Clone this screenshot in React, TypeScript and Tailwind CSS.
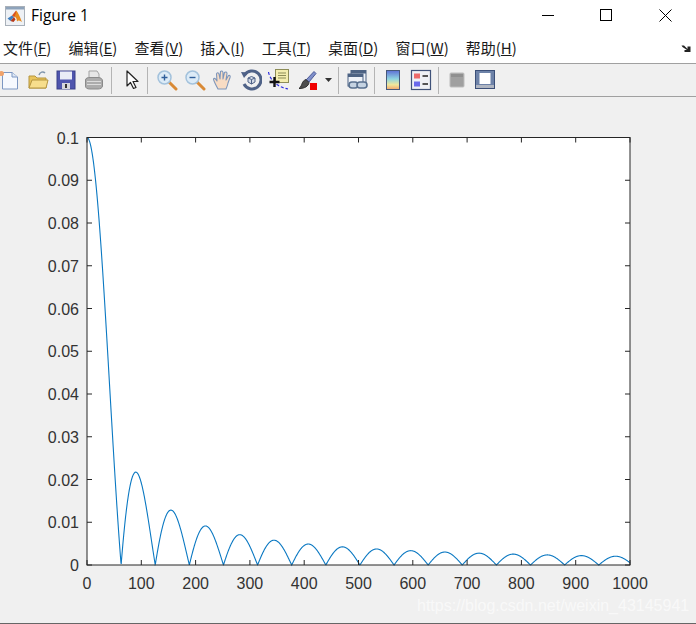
import React from 'react';

const X0 = 87;
const X1 = 630;
const Y0 = 565;
const Y1 = 137.5;

const sx = (v: number) => X0 + ((X1 - X0) * v) / 1000;
const sy = (v: number) => Y0 - ((Y0 - Y1) * v) / 0.1;

// |sinc| curve
const curve = Array.from({ length: 2001 }, (_, i) => {
  const x = i / 2;
  const u = x / 20;
  const y = x === 0 ? 0.1 : 0.1 * Math.abs(Math.sin(u) / u);
  return `${sx(x).toFixed(2)},${sy(y).toFixed(2)}`;
}).join(' ');

const xTicks = [0, 100, 200, 300, 400, 500, 600, 700, 800, 900, 1000];
const yTicks = [0, 0.01, 0.02, 0.03, 0.04, 0.05, 0.06, 0.07, 0.08, 0.09, 0.1];

const menus = [
  ['文件(', 'F'],
  ['编辑(', 'E'],
  ['查看(', 'V'],
  ['插入(', 'I'],
  ['工具(', 'T'],
  ['桌面(', 'D'],
  ['窗口(', 'W'],
  ['帮助(', 'H'],
];

const Icon: React.FC<{ children: React.ReactNode; first?: boolean }> = ({ children, first }) => (
  <div className={first ? 'w-[24px] h-[22px] flex justify-start' : 'w-[28px] h-[22px] flex justify-center'}>
    <svg width="22" height="22" viewBox="0 0 22 22" fill="none" className={first ? '-ml-[1px]' : ''}>
      {children}
    </svg>
  </div>
);

const Sep: React.FC<{ className: string }> = ({ className }) => (
  <div className={`w-[1px] h-[27px] bg-[#b4b4b4] ${className}`} />
);

const MatlabLogo = () => (
  <svg width="20" height="20" viewBox="0 0 20 20" fill="none">
    <rect x="0.5" y="0.5" width="19" height="19" fill="#eef1f5" stroke="#a8b0b9" />
    <rect x="1" y="1" width="18" height="2.5" fill="#8ea3bb" />
    <path d="M2.5 12.5 L7 9.5 L9 11 L5.5 15 Z" fill="#3f7fbf" />
    <path d="M7 9.5 L11 4.5 L13 9 L9 11 Z" fill="#d9531e" />
    <path d="M11 4.5 C13 6 15.5 12 17 16 C15 14.5 13.5 13.5 12 15.5 C11.5 12 11 11 9.5 11 L11 7 Z" fill="#e98a1c" />
    <path d="M5.5 15 L9 11 L10.5 13.5 L8.5 16 Z" fill="#b5391b" />
  </svg>
);

export default function App() {
  return (
    <div className="w-[696px] h-[624px] flex flex-col bg-[#f0f0f0] overflow-hidden font-['Liberation_Sans',sans-serif]">
      {/* Title bar */}
      <div className="h-[35px] bg-white flex items-center shrink-0">
        <div className="ml-[5px] -mt-[4px]">
          <MatlabLogo />
        </div>
        <span className="ml-[6px] -mt-[4px] text-[15.5px] text-black font-['Open_Sans',sans-serif]">Figure 1</span>
        <div className="ml-auto flex items-center -mt-[5px]">
          <svg width="12" height="12" viewBox="0 0 12 12" className="mr-[46px]">
            <path d="M0 6.5H12" stroke="#000" />
          </svg>
          <svg width="12" height="12" viewBox="0 0 12 12" className="mr-[47px]">
            <rect x="0.5" y="0.5" width="11" height="11" fill="none" stroke="#000" />
          </svg>
          <svg width="13" height="13" viewBox="0 0 13 13" className="mr-[24px]">
            <path d="M0.5 0.5L12.5 12.5M12.5 0.5L0.5 12.5" stroke="#000" />
          </svg>
        </div>
      </div>

      {/* Menu bar */}
      <div className="h-[29px] bg-white flex items-center pl-[3px] pb-[2px] shrink-0 border-b border-[#a0a0a0] relative">
        <div className="flex gap-[17px] text-[15px] leading-[20px] text-[#1a1a1a] font-['Noto_Sans_CJK_SC','Liberation_Sans',sans-serif]">
          {menus.map(([label, key]) => (
            <span key={key} className="whitespace-nowrap">
              {label}
              <span className="underline">{key}</span>)
            </span>
          ))}
        </div>
        <svg width="11" height="9" viewBox="0 0 11 9" className="absolute left-[681px] top-[9px]">
          <path d="M0.5 1.5H3L6.5 5V2.5H9.5V8H3.5V6H6L1.5 3Z" fill="#222" />
        </svg>
      </div>

      {/* Toolbar */}
      <div className="h-[33px] flex items-center shrink-0 border-b border-[#a0a0a0]">
        <Icon first>
          <path d="M3.5 3.5H13L18.5 8V20H3.5Z" fill="#f6f9fe" stroke="#7c97c2" />
          <path d="M13 3.5V8H18.5" fill="#dfe8f5" stroke="#7c97c2" />
          <circle cx="2.5" cy="4.5" r="2.5" fill="#f0a36b" />
        </Icon>
        <Icon>
          <path d="M2 7H8L10 9H19V19H2Z" fill="#e9c45c" stroke="#b5953f" />
          <path d="M2 19L5 11H21L19 19Z" fill="#f7de8c" stroke="#b5953f" />
          <path d="M12 6C13 3 16 2 18 4" stroke="#7f95ad" strokeWidth="1.5" />
        </Icon>
        <Icon>
          <rect x="2" y="2" width="18" height="18" fill="#4f55ae" stroke="#3a4189" />
          <rect x="5" y="2.5" width="12" height="8" fill="#e9ecf7" />
          <rect x="7" y="14" width="8" height="6" fill="#d6d6dc" />
          <rect x="10" y="15" width="2" height="4" fill="#333" />
        </Icon>
        <Icon>
          <path d="M6 2H14L16 5V10H6Z" fill="#e6e6e6" stroke="#a3a3a3" />
          <path d="M2.5 11C2.5 9 5 8.5 7 8.5H15C18 8.5 19.5 10 19.5 12V17C19.5 19 17 20 15 20H7C4 20 2.5 19 2.5 17Z" fill="#acacac" stroke="#8a8a8a" />
          <path d="M4 12.5H18M4 15.5H18" stroke="#dcdcdc" />
        </Icon>
        <Sep className="ml-[3px] mr-[6px]" />
        <Icon>
          <path d="M6 2V17L9.5 13.5L12.5 19.5L15 18.5L12 12.5H17Z" fill="#fff" stroke="#222" strokeWidth="1.2" strokeLinejoin="round" />
        </Icon>
        <Sep className="ml-[1px] mr-[5px]" />
        <Icon>
          <path d="M13 13L20 20" stroke="#d98a36" strokeWidth="3" strokeLinecap="round" />
          <circle cx="8.5" cy="8.5" r="6.5" fill="#dcebf7" stroke="#a3c2dc" strokeWidth="1.5" />
          <path d="M5.5 8.5H11.5M8.5 5.5V11.5" stroke="#2f5f9b" strokeWidth="1.4" />
        </Icon>
        <Icon>
          <path d="M13 13L20 20" stroke="#d98a36" strokeWidth="3" strokeLinecap="round" />
          <circle cx="8.5" cy="8.5" r="6.5" fill="#dcebf7" stroke="#a3c2dc" strokeWidth="1.5" />
          <path d="M5.5 8.5H11.5" stroke="#2f5f9b" strokeWidth="1.4" />
        </Icon>
        <Icon>
          <path d="M6 20C4 16 1.5 12 1.5 10C2.5 8.5 4 10 5 12L4.5 5C5 3 6.5 3.5 7 5L8 10L8.5 2.5C9.5 1.5 10.5 2 11 3.5L11 10L12.5 3.5C13.5 2.5 15 3 15 4.5L14 11L16.5 6.5C18 6 18.5 7 18 8.5L16 14C15.5 17 14.5 18.5 14 20Z" fill="#f8dcc4" stroke="#7d96bb" strokeWidth="1.1" strokeLinejoin="round" />
        </Icon>
        <Icon>
          <path d="M4.5 6A9 9 0 1 1 4 15" stroke="#4f6287" strokeWidth="3" />
          <path d="M1 3L8.5 3.5L4 9Z" fill="#4f6287" />
          <path d="M8 9L11.5 7.5L15 9V13L11.5 15L8 13Z" fill="#d3dae6" stroke="#4f6287" />
          <path d="M8 9L11.5 10.5L15 9M11.5 10.5V15" stroke="#4f6287" />
        </Icon>
        <Icon>
          <path d="M0.5 3C2 11 9 18 20 20" stroke="#2a2ae0" strokeWidth="1.2" strokeDasharray="3 2" />
          <rect x="7.5" y="0.5" width="13" height="13" fill="#f4eeb0" stroke="#8d8d58" />
          <path d="M10 4H18M10 6.5H18M10 9H18" stroke="#8d8d58" />
          <path d="M6.5 8V18M1.5 13H11.5" stroke="#111" strokeWidth="2.4" />
        </Icon>
        <Icon>
          <path d="M10 11L18 2.5L20 4.5L13 13Z" fill="#7f8fc9" stroke="#4d5b99" />
          <path d="M10 10.5L13 13.5C12.5 17 9 19.5 3 19.5C5 18 5.5 16 6.5 13.5C7.5 11.5 9 11 10 10.5Z" fill="#4e4e4e" stroke="#2b2b2b" />
          <rect x="14" y="14" width="7" height="7" fill="#f00000" />
        </Icon>
        <div className="w-[14px] flex justify-center">
          <svg width="7" height="4" viewBox="0 0 7 4">
            <path d="M0 0H7L3.5 4Z" fill="#333" />
          </svg>
        </div>
        <Sep className="ml-[3px] mr-[4px]" />
        <Icon>
          <rect x="5" y="1.5" width="15" height="13" fill="#eef2f8" stroke="#4c6283" />
          <rect x="5" y="1.5" width="15" height="3" fill="#4c6283" />
          <rect x="2" y="5" width="15" height="12" fill="#eef2f8" stroke="#4c6283" />
          <rect x="2" y="5" width="15" height="3" fill="#4c6283" />
          <rect x="3" y="13" width="9" height="6" rx="3" fill="#c5d3e2" stroke="#58708f" strokeWidth="1.6" />
          <rect x="11" y="13" width="10" height="6" rx="3" fill="#c5d3e2" stroke="#58708f" strokeWidth="1.6" />
        </Icon>
        <Sep className="ml-[3px] mr-[4px]" />
        <Icon>
          <defs>
            <linearGradient id="cbar" x1="0" y1="0" x2="0" y2="1">
              <stop offset="0" stopColor="#5d6fd6" />
              <stop offset="0.45" stopColor="#8fd6e0" />
              <stop offset="0.75" stopColor="#f1e79a" />
              <stop offset="1" stopColor="#f0a56d" />
            </linearGradient>
          </defs>
          <rect x="4.5" y="1.5" width="13" height="19" fill="url(#cbar)" stroke="#47597a" />
        </Icon>
        <Icon>
          <rect x="1.5" y="1.5" width="19" height="19" fill="#eef1f6" stroke="#3f5279" strokeWidth="1.2" />
          <rect x="4" y="4.5" width="6" height="5" fill="#ec6a6a" />
          <rect x="4" y="12.5" width="6" height="5" fill="#6a6aec" />
          <path d="M12.5 7H18M12.5 15H18" stroke="#222" strokeWidth="1.4" />
        </Icon>
        <Sep className="ml-[3px] mr-[4px]" />
        <Icon>
          <rect x="4" y="4" width="14" height="14" rx="1" fill="#a0a0a0" stroke="#bdbdbd" />
          <rect x="5" y="5" width="12" height="3" fill="#8f8f8f" />
        </Icon>
        <Icon>
          <rect x="1.5" y="1.5" width="19" height="18" fill="#6d82a8" stroke="#3b4f78" />
          <rect x="5.5" y="4" width="11" height="11" fill="#fff" />
          <rect x="2" y="16" width="18" height="3" fill="#b0b6c2" />
        </Icon>
      </div>

      {/* Plot area */}
      <div className="flex-1 min-h-0 border-b border-[#666]">
        <svg width="696" height="526" viewBox="0 97 696 526" className="block" style={{ fontFamily: 'Liberation Sans' }}>
          <rect x={X0} y={Y1} width={X1 - X0} height={Y0 - Y1} fill="#fff" />
          <polyline points={curve} fill="none" stroke="#0a78c2" strokeWidth="1.1" />
          <rect x={X0} y={Y1} width={X1 - X0} height={Y0 - Y1} fill="none" stroke="#262626" strokeWidth="1" />
          {xTicks.map((t) => (
            <g key={t}>
              <path
                d={`M${sx(t)} ${Y0}V${Y0 - 5}M${sx(t)} ${Y1}V${Y1 + 5}`}
                stroke="#262626"
              />
              <text x={sx(t)} y={Y0 + 24} textAnchor="middle" fontSize="16" fill="#333">
                {t}
              </text>
            </g>
          ))}
          {yTicks.map((t) => (
            <g key={t}>
              <path
                d={`M${X0} ${sy(t)}H${X0 + 5}M${X1} ${sy(t)}H${X1 - 5}`}
                stroke="#262626"
              />
              <text x={X0 - 8} y={sy(t) + 6} textAnchor="end" fontSize="16" fill="#333">
                {t}
              </text>
            </g>
          ))}
          <text x="417" y="611" fontSize="16" fill="#ffffff" fillOpacity="0.6">
            https://blog.csdn.net/weixin_43145941
          </text>
        </svg>
      </div>
    </div>
  );
}
